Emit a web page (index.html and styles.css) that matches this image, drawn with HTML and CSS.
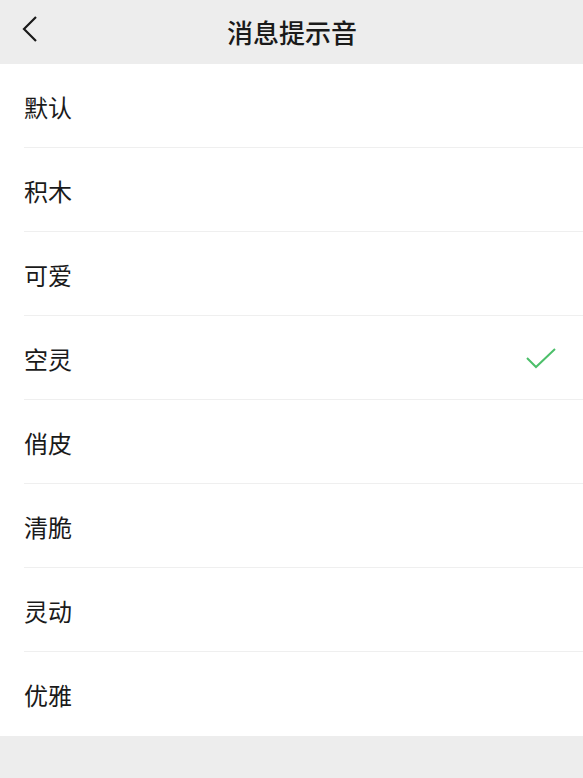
FILE: index.html
```html
<!DOCTYPE html>
<html lang="zh-CN">
<head>
<meta charset="utf-8">
<link rel="stylesheet" href="styles.css">
</head>
<body>
<div class="page">
  <header class="nav">
    <svg class="back" width="20" height="30" viewBox="0 0 20 30"><path d="M15 4 L3 16 L15 28" fill="none" stroke="#1a1a1a" stroke-width="2.2"/></svg>
    <h1 class="title">消息提示音</h1>
  </header>
  <ul class="list">
    <li class="row">默认</li>
    <li class="row">积木</li>
    <li class="row">可爱</li>
    <li class="row">空灵<svg class="check" width="30" height="22" viewBox="0 0 30 22"><path d="M1 10 L10 19 L29 1" fill="none" stroke="#4cbf6a" stroke-width="2"/></svg></li>
    <li class="row">俏皮</li>
    <li class="row">清脆</li>
    <li class="row">灵动</li>
    <li class="row">优雅</li>
  </ul>
  <div class="footer"></div>
</div>
</body>
</html>
```
FILE: styles.css
```css
* { box-sizing: border-box; }
html, body { margin: 0; padding: 0; }
body {
  font-family: "Noto Sans CJK SC", "Noto Sans", sans-serif;
  background: #ededed;
  color: #1a1a1a;
}
.page { width: 583px; height: 778px; display: flex; flex-direction: column; }
.nav {
  height: 64px;
  background: #ededed;
  display: flex;
  align-items: center;
  justify-content: center;
  position: relative;
}
.back { position: absolute; left: 21px; top: 13px; }
.title {
  margin: 0;
  font-size: 26px;
  font-weight: 500;
  letter-spacing: 0;
  line-height: 1;
  padding-left: 1px;
}
.list { list-style: none; margin: 0; padding: 0 0 0 24px; background: #fff; }
.row {
  height: 84px;
  display: flex;
  align-items: center;
  justify-content: space-between;
  font-size: 24px;
  padding-right: 27px;
  border-bottom: 1px solid #efefef;
  padding-top: 1px;
}
.row:last-child { border-bottom: none; height: 84px; }
.check { margin-top: 2px; }
.footer { flex: 1; background: #ededed; }
```
